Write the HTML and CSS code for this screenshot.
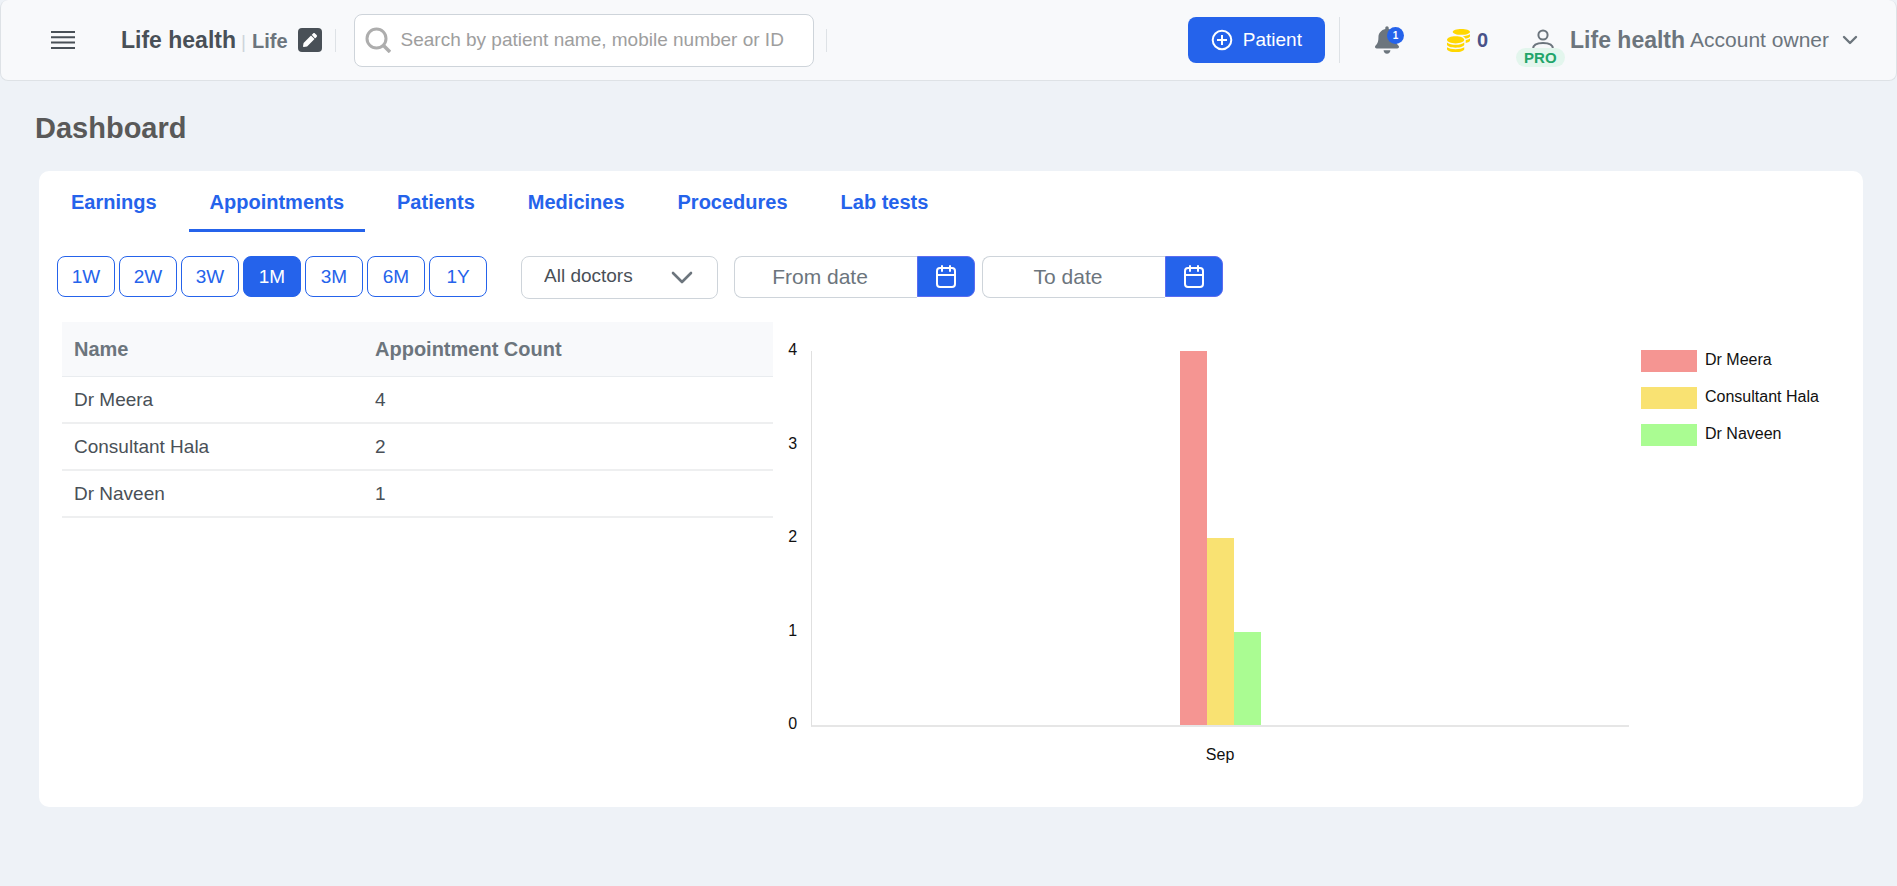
FILE: index.html
```html
<!DOCTYPE html>
<html lang="en">
<head>
  <meta charset="UTF-8" />
  <meta name="viewport" content="width=device-width, initial-scale=1.0" />
  <title>Dashboard</title>
  <link rel="stylesheet" href="styles.css">
</head>
<body>
  <header class="topbar">
    <button class="icon-btn menu-btn" type="button" aria-label="Menu">
      <svg width="24" height="20" viewBox="0 0 24 20" fill="none" stroke="#495057" stroke-width="2">
        <path d="M0 2h24M0 7.3h24M0 12.6h24M0 18h24" />
      </svg>
    </button>

    <div class="clinic">
      <span class="clinic-name">Life health</span>
      <span class="clinic-sep">|</span>
      <span class="clinic-branch">Life</span>
    </div>
    <button class="icon-btn edit-btn" type="button" aria-label="Edit clinic">
      <svg width="14" height="14" viewBox="0 0 512 512" fill="#fff">
        <path d="M497.9 142.1l-46.1 46.1c-4.7 4.7-12.3 4.7-17 0l-111-111c-4.7-4.7-4.7-12.3 0-17l46.1-46.1c18.7-18.7 49.1-18.7 67.9 0l60.1 60.1c18.8 18.7 18.8 49.1 0 67.9zM284.2 99.8L21.6 362.4.4 483.9c-2.9 16.4 11.4 30.6 27.8 27.8l121.5-21.3 262.6-262.6c4.7-4.7 4.7-12.3 0-17l-111-111c-4.8-4.7-12.4-4.7-17.1 0z" />
      </svg>
    </button>

    <span class="divider"></span>

    <label class="search">
      <svg width="26" height="26" viewBox="0 0 26 26" fill="none" stroke="#adadad" stroke-width="3">
        <circle cx="11.5" cy="11.5" r="9.5" />
        <path d="M18 18l7 7" stroke-width="3.5" />
      </svg>
      <input type="text" placeholder="Search by patient name, mobile number or ID" aria-label="Search patients">
    </label>

    <span class="divider"></span>

    <div class="topbar-right">
      <button class="add-patient" type="button">
        <svg width="22" height="22" viewBox="0 0 22 22" fill="none" stroke="#fff" stroke-width="2">
          <circle cx="11" cy="11" r="9.3" />
          <path d="M11 6v10M6 11h10" />
        </svg>
        Patient
      </button>
      <span class="divider divider-tall"></span>
      <button class="icon-btn bell" type="button" aria-label="Notifications">
        <svg width="24" height="28" viewBox="0 0 448 512" fill="#6c757d">
          <path d="M224 512c35.32 0 63.97-28.65 63.97-64H160.03c0 35.35 28.65 64 63.97 64zm215.39-149.71c-19.32-20.76-55.47-51.99-55.47-154.29 0-77.7-54.48-139.9-127.94-155.16V32c0-17.67-14.32-32-31.98-32s-31.98 14.33-31.98 32v20.84C118.56 68.1 64.08 130.3 64.08 208c0 102.3-36.15 133.53-55.47 154.29-6 6.45-8.66 14.16-8.61 21.71.11 16.4 12.98 32 32.1 32h383.8c19.12 0 32-15.6 32.1-32 .05-7.55-2.61-15.27-8.61-21.71z" />
        </svg>
        <span class="bell-count">1</span>
      </button>
      <div class="coins">
        <svg width="23" height="23" viewBox="0 0 512 512" fill="#ffd700">
          <path d="M0 405.3V448c0 35.3 86 64 192 64s192-28.7 192-64v-42.7C342.7 434.4 267.2 448 192 448S41.3 434.4 0 405.3zM320 128c106 0 192-28.7 192-64S426 0 320 0 128 28.7 128 64s86 64 192 64zM0 300.4V352c0 35.3 86 64 192 64s192-28.7 192-64v-51.6c-41.3 34-116.9 51.6-192 51.6S41.3 334.4 0 300.4zm416 11c57.3-11.1 96-31.7 96-55.4v-42.7c-23.2 16.4-57.3 27.6-96 34.5v63.6zM192 160C86 160 0 195.8 0 240s86 80 192 80 192-35.8 192-80-86-80-192-80zm219.3 56.3c60-10.8 100.7-32 100.7-56.3v-42.7c-35.5 25.1-96.5 38.6-160.7 41.8 29.5 14.3 51.2 33.5 60 57.2z" />
        </svg>
        <span>0</span>
      </div>
      <button class="icon-btn account" type="button">
        <span class="avatar">
          <svg width="24" height="22" viewBox="0 0 24 22" fill="none" stroke="#6c757d" stroke-width="2">
            <circle cx="12" cy="6" r="4.6" />
            <path d="M2 22v-2c0-4 4-6 10-6s10 2 10 6v2" />
          </svg>
          <span class="plan">PRO</span>
        </span>
        <span class="account-name">Life health</span>
        <span class="account-role">Account owner</span>
        <svg class="caret" width="16" height="10" viewBox="0 0 16 10" fill="none" stroke="#6c757d" stroke-width="2.4" stroke-linecap="round" stroke-linejoin="round">
          <path d="M2 2l6 6 6-6" />
        </svg>
      </button>
    </div>
  </header>

  <main>
    <h1>Dashboard</h1>

    <section class="card">
      <nav class="tabs">
        <a href="#">Earnings</a>
        <a href="#" class="active">Appointments</a>
        <a href="#">Patients</a>
        <a href="#">Medicines</a>
        <a href="#">Procedures</a>
        <a href="#">Lab tests</a>
      </nav>

      <div class="filters">
        <div class="periods">
          <button type="button">1W</button>
          <button type="button">2W</button>
          <button type="button">3W</button>
          <button type="button" class="active">1M</button>
          <button type="button">3M</button>
          <button type="button">6M</button>
          <button type="button">1Y</button>
        </div>

        <div class="select">
          <select aria-label="Doctor">
            <option>All doctors</option>
          </select>
          <svg width="22" height="14" viewBox="0 0 22 14" fill="none" stroke="#6c757d" stroke-width="2.6" stroke-linecap="round" stroke-linejoin="round">
            <path d="M2 2l9 9 9-9" />
          </svg>
        </div>

        <div class="dates">
          <div class="date">
            <input type="text" placeholder="From date" aria-label="From date">
            <button type="button" aria-label="Pick from date">
              <svg width="20" height="24" viewBox="0 0 20 24" fill="none" stroke="#fff" stroke-width="2" stroke-linecap="round">
                <rect x="1" y="3" width="18" height="19" rx="3" />
                <path d="M1 10h18M6 1v5M14 1v5" />
              </svg>
            </button>
          </div>
          <div class="date">
            <input type="text" placeholder="To date" aria-label="To date">
            <button type="button" aria-label="Pick to date">
              <svg width="20" height="24" viewBox="0 0 20 24" fill="none" stroke="#fff" stroke-width="2" stroke-linecap="round">
                <rect x="1" y="3" width="18" height="19" rx="3" />
                <path d="M1 10h18M6 1v5M14 1v5" />
              </svg>
            </button>
          </div>
        </div>
      </div>

      <div class="report">
        <div class="report-table">
          <table>
            <thead>
              <tr><th>Name</th><th>Appointment Count</th></tr>
            </thead>
            <tbody>
              <tr><td>Dr Meera</td><td>4</td></tr>
              <tr><td>Consultant Hala</td><td>2</td></tr>
              <tr><td>Dr Naveen</td><td>1</td></tr>
            </tbody>
          </table>
        </div>

        <div class="chart">
          <div class="y-axis">
            <span>4</span>
            <span>3</span>
            <span>2</span>
            <span>1</span>
            <span>0</span>
          </div>
          <div class="plot">
            <div class="bars">
              <div class="bar red" style="height: 100%"></div>
              <div class="bar yellow" style="height: 50%"></div>
              <div class="bar green" style="height: 25%"></div>
            </div>
            <div class="x-label">Sep</div>
          </div>
          <ul class="legend">
            <li><span class="swatch red"></span>Dr Meera</li>
            <li><span class="swatch yellow"></span>Consultant Hala</li>
            <li><span class="swatch green"></span>Dr Naveen</li>
          </ul>
        </div>
      </div>
    </section>
  </main>
</body>
</html>
```
FILE: styles.css
```css
* {
  box-sizing: border-box;
}
body {
  margin: 0;
  font-family: "Liberation Sans", Arial, sans-serif;
  font-size: 19px;
  background-color: #eef2f7;
  color: #495057;
}
button, input, select {
  font-family: inherit;
  font-size: 19px;
}
button {
  cursor: pointer;
}
svg {
  display: block;
  flex-shrink: 0;
}

/* top bar */
.topbar {
  display: flex;
  align-items: center;
  height: 81px;
  padding: 0 38px 0 50px;
  background-color: #f8f9fb;
  border: 1px solid #dee2e6;
  border-top: none;
  border-radius: 8px;
}
.icon-btn {
  display: flex;
  align-items: center;
  padding: 0;
  border: none;
  background: none;
  color: #6c757d;
}
.menu-btn {
  margin-right: 46px;
}
.clinic {
  display: flex;
  align-items: baseline;
  white-space: nowrap;
}
.clinic-name {
  font-size: 23px;
  font-weight: bold;
}
.clinic-sep {
  margin: 0 6px 0 5px;
  color: #ced4da;
}
.clinic-branch {
  font-size: 20px;
  font-weight: bold;
  color: #6c757d;
}
.edit-btn {
  justify-content: center;
  width: 24px;
  height: 24px;
  margin: 0 13px 0 10px;
  border-radius: 4px;
  background-color: #495057;
}
.divider {
  width: 1px;
  height: 23px;
  background-color: #dee2e6;
}
.divider-tall {
  height: 46px;
  margin: 0 35px 0 14px;
}
.search {
  display: flex;
  align-items: center;
  flex: 0 1 460px;
  height: 53px;
  margin: 0 12px 0 18px;
  padding: 0 10px;
  background-color: #fff;
  border: 1px solid #ced4da;
  border-radius: 8px;
}
.search input {
  flex: 1;
  min-width: 0;
  margin-left: 10px;
  padding: 0;
  border: none;
  outline: none;
  background: none;
}
.search input::placeholder {
  color: #9e9e9e;
}
.topbar-right {
  display: flex;
  align-items: center;
  margin-left: auto;
  white-space: nowrap;
}
.add-patient {
  display: flex;
  align-items: center;
  gap: 10px;
  height: 46px;
  padding: 0 23px;
  border: none;
  border-radius: 8px;
  background-color: #2563eb;
  color: #fff;
}
.bell {
  position: relative;
}
.bell-count {
  position: absolute;
  top: 1px;
  left: 12px;
  width: 17px;
  height: 17px;
  border-radius: 50%;
  background-color: #2563eb;
  color: #fff;
  font-size: 10px;
  font-weight: bold;
  line-height: 17px;
  text-align: center;
}
.coins {
  display: flex;
  align-items: center;
  gap: 7px;
  margin: 0 43px 0 48px;
  font-size: 20px;
  font-weight: bold;
  color: #4a5289;
}
.avatar {
  position: relative;
  margin-right: 15px;
}
.plan {
  position: absolute;
  top: 19px;
  left: -15px;
  padding: 0 8px;
  border-radius: 10px;
  background-color: #e3f6ed;
  color: #22a56a;
  font-size: 15px;
  font-weight: bold;
  line-height: 19px;
}
.account-name {
  margin-right: 5px;
  font-size: 23px;
  font-weight: bold;
}
.account-role {
  margin-right: 13px;
  font-size: 21px;
}

/* page */
main {
  padding: 30px 34px 40px 39px;
}
h1 {
  margin: 0 0 26px -4px;
  font-size: 29px;
  line-height: 34px;
  color: #595959;
}
.card {
  background-color: #fff;
  border-radius: 10px;
}
.tabs {
  display: flex;
  gap: 11px;
  padding-left: 11px;
}
.tabs a {
  padding: 19px 21px 15px;
  border-bottom: 3px solid transparent;
  color: #2563eb;
  font-size: 20px;
  font-weight: bold;
  line-height: 24px;
  text-decoration: none;
}
.tabs a.active {
  border-color: #2563eb;
}
.filters {
  display: flex;
  align-items: flex-start;
  padding: 24px 18px 23px;
}
.periods {
  display: flex;
  gap: 4px;
  margin-right: 34px;
}
.periods button {
  width: 58px;
  height: 41px;
  padding: 0;
  border: 1px solid #2563eb;
  border-radius: 8px;
  background-color: #fff;
  color: #2563eb;
}
.periods button.active {
  background-color: #2563eb;
  color: #fff;
}
.select {
  position: relative;
  margin-right: 16px;
}
.select select {
  display: block;
  width: 197px;
  height: 43px;
  padding: 0 40px 4px 22px;
  border: 1px solid #ced4da;
  border-radius: 8px;
  background-color: #fff;
  color: #495057;
  appearance: none;
}
.select svg {
  position: absolute;
  top: 15px;
  right: 25px;
  pointer-events: none;
}
.dates {
  display: flex;
  gap: 7px;
}
.date {
  display: flex;
  align-items: flex-start;
}
.date input {
  width: 183px;
  height: 42px;
  padding: 0 12px 0 0;
  border: 1px solid #ced4da;
  border-right: none;
  border-radius: 8px 0 0 8px;
  font-size: 21px;
  text-align: center;
}
.date input::placeholder {
  color: #6c757d;
}
.date button {
  display: flex;
  align-items: center;
  justify-content: center;
  width: 58px;
  height: 41px;
  padding: 0;
  border: 1px solid #5b6cf0;
  border-radius: 0 8px 8px 0;
  background-color: #2563eb;
}

/* table and chart */
.report {
  display: flex;
  align-items: flex-start;
  padding: 0 23px 42px;
}
.report-table {
  flex: 0 0 40%;
}
table {
  width: 100%;
  border-collapse: separate;
  border-spacing: 0;
  table-layout: fixed;
}
th, td {
  padding: 0 12px;
  text-align: left;
}
th {
  height: 55px;
  background-color: #f8f9fb;
  border-bottom: 1px solid #e9ecef;
  color: #6c757d;
  font-size: 20px;
}
th:first-child {
  width: 301px;
}
td {
  height: 47px;
  border-bottom: 2px solid #eeeff0;
}
.chart {
  flex: 1;
  display: flex;
  align-items: flex-start;
  padding-top: 18px;
  color: #111;
  font-size: 16px;
  line-height: 20px;
}
.y-axis {
  display: flex;
  flex-direction: column;
  justify-content: space-between;
  height: 394px;
  margin: 0 14px 0 15px;
}
.plot {
  flex: 1;
  padding-top: 11px;
}
.bars {
  display: flex;
  align-items: flex-end;
  justify-content: center;
  height: 376px;
  border-left: 1px solid #e0e0e0;
  border-bottom: 2px solid #e6e6e6;
}
.bar {
  width: 27px;
}
.red {
  background-color: #f59592;
}
.yellow {
  background-color: #f9e272;
}
.green {
  background-color: #aafc92;
}
.x-label {
  margin-top: 18px;
  text-align: center;
}
.legend {
  display: flex;
  flex-direction: column;
  gap: 15px;
  width: 211px;
  margin: 0;
  padding: 10px 0 0 12px;
  list-style: none;
}
.legend li {
  display: flex;
  gap: 8px;
  white-space: nowrap;
}
.swatch {
  width: 56px;
  height: 22px;
}
```
